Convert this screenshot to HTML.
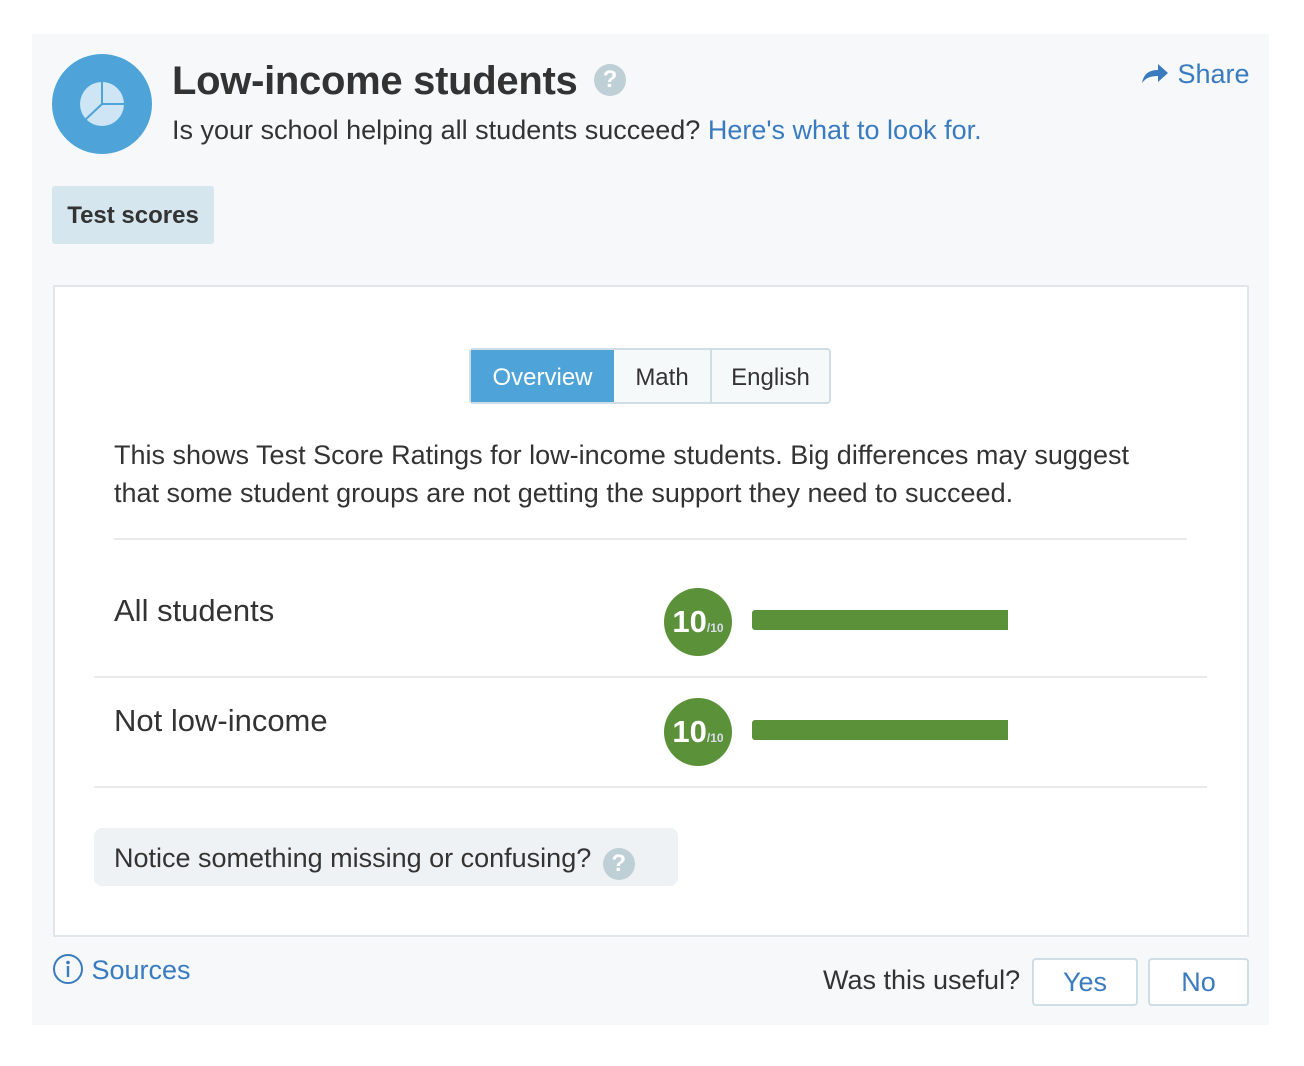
<!DOCTYPE html>
<html><head><style>
*{box-sizing:border-box;margin:0;padding:0}
body{width:1304px;height:1066px;background:#fff;font-family:"Liberation Sans",sans-serif;color:#333;position:relative;overflow:hidden}
.abs{position:absolute}
.panel{left:32px;top:34px;width:1237px;height:991px;background:#f6f8fa}
.blue{color:#3a7bbf}
</style></head><body>
<div class="abs panel"></div>
<svg class="abs" style="left:52px;top:54px" width="100" height="100" viewBox="0 0 100 100">
<circle cx="50" cy="50" r="50" fill="#4ea3d9"/>
<circle cx="50" cy="50" r="22" fill="#cde5f4"/>
<path d="M50 28 V50 H72 M50 50 L33 66" stroke="#4ea3d9" stroke-width="2" fill="none"/>
</svg>
<div class="abs" style="left:172px;top:59px;font-size:40px;font-weight:bold;color:#333;letter-spacing:-0.3px">Low-income students</div>
<div class="abs" style="left:594px;top:64px;width:32px;height:32px;border-radius:50%;background:#bfcfd6;color:#fff;font-weight:bold;font-size:24px;text-align:center;line-height:32px">?</div>
<div class="abs" style="left:172px;top:115px;font-size:27px">Is your school helping all students succeed? <span class="blue">Here's what to look for.</span></div>
<div class="abs blue" style="left:1140px;top:59px;font-size:27px"><svg width="30" height="24" viewBox="0 0 30 24" style="vertical-align:-2px"><path d="M2 22 C4 12 10 9 18 9 V3 L28 12 L18 21 V15 C10 15 6 17 2 22Z" fill="#3a7bbf"/></svg> Share</div>
<div class="abs" style="left:52px;top:186px;width:162px;height:58px;background:#d5e6ee;border-radius:3px;font-size:24px;font-weight:bold;color:#333;line-height:60px;text-align:center">Test scores</div>
<div class="abs" style="left:53px;top:285px;width:1196px;height:652px;background:#fff;border:2px solid #e1e6ea"></div>
<div class="abs" style="left:469px;top:348px;width:362px;height:56px;border:2px solid #cfdde4;border-radius:4px;background:#f6f9fa;display:flex;font-size:24px">
<div style="width:143px;background:#4ea3d9;color:#fff;text-align:center;line-height:55px">Overview</div>
<div style="width:98px;border-right:2px solid #cfdde4;text-align:center;line-height:55px">Math</div>
<div style="flex:1;text-align:center;line-height:55px">English</div>
</div>
<div class="abs" style="left:114px;top:436px;font-size:27px;line-height:38px;width:1060px">This shows Test Score Ratings for low-income students. Big differences may suggest that some student groups are not getting the support they need to succeed.</div>
<div class="abs" style="left:114px;top:538px;width:1073px;height:2px;background:#e8eaec"></div>
<div class="abs" style="left:114px;top:593px;font-size:31px">All students</div>
<div class="abs" style="left:94px;top:676px;width:1113px;height:2px;background:#e8eaec"></div>
<div class="abs" style="left:114px;top:703px;font-size:31px">Not low-income</div>
<div class="abs" style="left:94px;top:786px;width:1113px;height:2px;background:#e8eaec"></div>
<div class="abs" style="left:664px;top:588px;width:68px;height:68px;border-radius:50%;background:#5a9139;color:#fff;text-align:center;line-height:68px"><b style="font-size:31px">10</b><b style="font-size:12px;color:#dde">/10</b></div>
<div class="abs" style="left:752px;top:610px;width:256px;height:20px;background:#5a9139;border-radius:3px 0 0 3px"></div>
<div class="abs" style="left:664px;top:698px;width:68px;height:68px;border-radius:50%;background:#5a9139;color:#fff;text-align:center;line-height:68px"><b style="font-size:31px">10</b><b style="font-size:12px;color:#dde">/10</b></div>
<div class="abs" style="left:752px;top:720px;width:256px;height:20px;background:#5a9139;border-radius:3px 0 0 3px"></div>
<div class="abs" style="left:94px;top:828px;width:584px;height:58px;background:#eef2f5;border-radius:8px;font-size:27px;line-height:60px;padding-left:20px">Notice something missing or confusing? <span style="display:inline-block;width:32px;height:32px;border-radius:50%;background:#bfcfd6;color:#fff;font-weight:bold;font-size:24px;text-align:center;line-height:32px;vertical-align:-4px;margin-left:4px">?</span></div>
<div class="abs blue" style="left:52px;top:953px;font-size:27px"><svg width="32" height="32" viewBox="0 0 32 32" style="vertical-align:-6px"><circle cx="16" cy="16" r="14" fill="none" stroke="#3a7bbf" stroke-width="2"/><circle cx="16" cy="9.5" r="1.8" fill="#3a7bbf"/><rect x="14.8" y="13" width="2.4" height="11" fill="#3a7bbf"/></svg> Sources</div>
<div class="abs" style="left:823px;top:965px;font-size:27px">Was this useful?</div>
<div class="abs blue" style="left:1032px;top:958px;width:106px;height:48px;border:2px solid #cfdde4;border-radius:4px;background:#fff;text-align:center;line-height:44px;font-size:27px">Yes</div>
<div class="abs blue" style="left:1148px;top:958px;width:101px;height:48px;border:2px solid #cfdde4;border-radius:4px;background:#fff;text-align:center;line-height:44px;font-size:27px">No</div>
</body></html>
